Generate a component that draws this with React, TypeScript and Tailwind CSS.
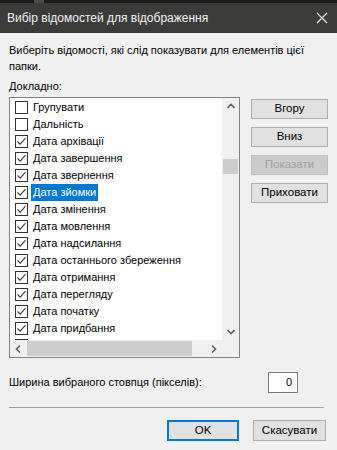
const font = { fontFamily: '"Liberation Sans", Arial, sans-serif' };

type Item = { label: string; checked: boolean };

const items: Item[] = [
  { label: 'Групувати', checked: false },
  { label: 'Дальність', checked: false },
  { label: 'Дата архівації', checked: true },
  { label: 'Дата завершення', checked: true },
  { label: 'Дата звернення', checked: true },
  { label: 'Дата зйомки', checked: true },
  { label: 'Дата змінення', checked: true },
  { label: 'Дата мовлення', checked: true },
  { label: 'Дата надсилання', checked: true },
  { label: 'Дата останнього збереження', checked: true },
  { label: 'Дата отримання', checked: true },
  { label: 'Дата перегляду', checked: true },
  { label: 'Дата початку', checked: true },
  { label: 'Дата придбання', checked: true },
];

function CheckBox({ checked }: { checked: boolean }) {
  return (
    <span className="flex h-[13px] w-[13px] shrink-0 items-center justify-center border border-[#333] bg-white">
      {checked && (
        <svg width="11" height="11" viewBox="0 0 11 11">
          <path d="M1.5 5.5 L4.2 8.2 L9.5 2.2" fill="none" stroke="#3c3c3c" strokeWidth="1.1" />
        </svg>
      )}
    </span>
  );
}

function Chevron({ dir }: { dir: 'up' | 'down' | 'left' | 'right' }) {
  const d = {
    up: 'M1.5 6 L5 2.5 L8.5 6',
    down: 'M1.5 3 L5 6.5 L8.5 3',
    left: 'M6 1.5 L2.5 5 L6 8.5',
    right: 'M3 1.5 L6.5 5 L3 8.5',
  }[dir];
  return (
    <svg width="9" height="9" viewBox="0 0 9 9">
      <path d={d} fill="none" stroke="#606060" strokeWidth="1.6" />
    </svg>
  );
}

function SideButton({ label, disabled }: { label: string; disabled?: boolean }) {
  return (
    <button
      className={
        disabled
          ? 'h-[20px] w-[77px] border border-[#bfbfbf] bg-[#cccccc] text-[11.5px] leading-none text-[#a0a0a0]'
          : 'h-[20px] w-[77px] border border-[#adadad] bg-[#e1e1e1] text-[11.5px] leading-none text-black'
      }
    >
      {label}
    </button>
  );
}

export default function App() {
  return (
    <div className="flex h-[450px] w-[337px] flex-col overflow-hidden bg-[#f0f0f0]" style={font}>
      {/* top edge */}
      <div className="flex h-[3px] bg-[#1b1b1b]">
        <div className="ml-[34px] w-[10px] bg-[#4a4a4a]" />
      </div>

      {/* Title bar */}
      <div className="flex h-[30px] items-center justify-between bg-[#3b3b3a] pl-[7px] pr-[9px]">
        <span className="text-[12px] text-[#f2f2f2]">Вибір відомостей для відображення</span>
        <svg width="12" height="12" viewBox="0 0 12 12">
          <path d="M1 1 L11 11 M11 1 L1 11" stroke="#e8e8e8" strokeWidth="1.2" />
        </svg>
      </div>

      <div className="flex flex-1 flex-col px-[9px] pt-[9px] text-[11px] text-black">
        <p className="leading-[16px]">Виберіть відомості, які слід показувати для елементів цієї папки.</p>
        <p className="mt-[4px] leading-[16px]">Докладно:</p>

        <div className="mt-[3px] flex gap-[11px]">
          {/* List box */}
          <div className="flex h-[261px] w-[232px] flex-col border border-[#828282] bg-white">
            <div className="flex min-h-0 flex-1">
              <div className="flex-1 overflow-hidden pt-[1px]">
                {items.map((it) => (
                  <div key={it.label} className="flex h-[17px] items-center pl-[5px]">
                    <CheckBox checked={it.checked} />
                    <span
                      className={
                        it.label === 'Дата зйомки'
                          ? 'ml-[3px] whitespace-nowrap bg-[#0078d7] px-[2px] leading-[17px] text-white'
                          : 'ml-[3px] whitespace-nowrap px-[2px] leading-[17px]'
                      }
                    >
                      {it.label}
                    </span>
                  </div>
                ))}
                {/* next row, only its top edge shows */}
                <div className="flex h-[17px] items-center pl-[5px]">
                  <CheckBox checked />
                </div>
              </div>
              <div className="flex w-[17px] flex-col items-center bg-[#f0f0f0]">
                <div className="flex h-[17px] items-center justify-center">
                  <Chevron dir="up" />
                </div>
                <div className="flex-1 w-full px-[1px]">
                  <div className="mt-[44px] h-[15px] w-full bg-[#cdcdcd]" />
                </div>
                <div className="flex h-[17px] items-center justify-center">
                  <Chevron dir="down" />
                </div>
              </div>
            </div>
            <div className="flex h-[17px] items-center bg-[#f0f0f0]">
              <div className="flex w-[17px] items-center justify-center">
                <Chevron dir="left" />
              </div>
              <div className="flex-1 py-[1px]">
                <div className="h-[15px] w-[165px] bg-[#cdcdcd]" />
              </div>
              <div className="flex w-[17px] items-center justify-center">
                <Chevron dir="right" />
              </div>
              <div className="w-[17px]" />
            </div>
          </div>

          {/* Side buttons */}
          <div className="flex flex-col gap-[8px] pt-[2px]">
            <SideButton label="Вгору" />
            <SideButton label="Вниз" />
            <SideButton label="Показати" disabled />
            <SideButton label="Приховати" />
          </div>
        </div>

        <div className="mt-[14px] flex items-center justify-between pr-[30px]">
          <span>Ширина вибраного стовпця (пікселів):</span>
          <div className="flex h-[21px] w-[30px] items-center justify-end border border-[#7a7a7a] bg-white pr-[5px]">
            0
          </div>
        </div>

        <div className="mt-[14px] mr-[4px] h-px bg-[#a0a0a0]" />

        <div className="mt-[12px] flex justify-end gap-[14px] pr-[2px]">
          <button className="h-[21px] w-[72px] border-2 border-[#0078d7] bg-[#e1e1e1] text-[11.5px] leading-none">OK</button>
          <button className="h-[21px] w-[73px] border border-[#adadad] bg-[#e1e1e1] text-[11.5px] leading-none">Скасувати</button>
        </div>
      </div>
    </div>
  );
}
